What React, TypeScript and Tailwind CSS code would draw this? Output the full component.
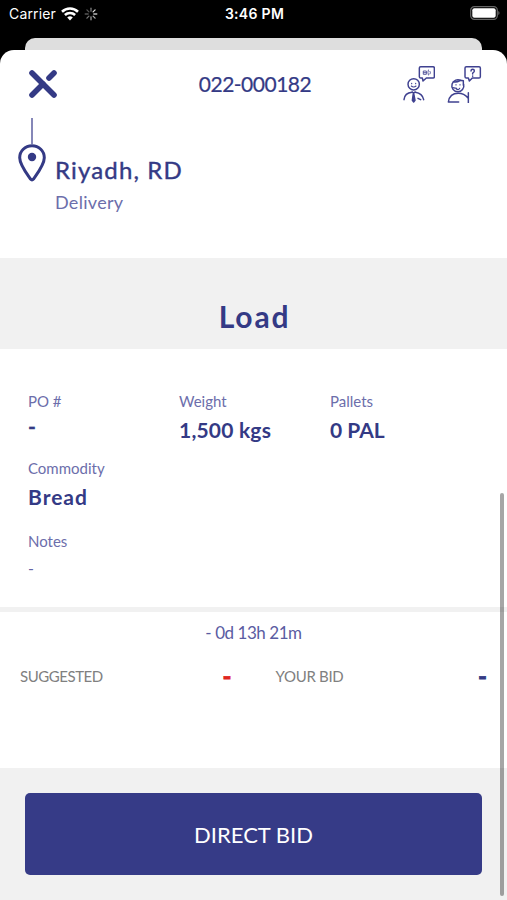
import type { ReactNode } from "react";

function WifiIcon() {
  return (
    <svg viewBox="0 0 18 14" className="h-3.5 w-[18px]" fill="none" stroke="#fff" strokeWidth="2.6">
      <path d="M1 4.7a11.6 11.6 0 0 1 16 0" />
      <path d="M3.9 8a7.4 7.4 0 0 1 10.2 0" />
      <path d="M9 13.5 6.2 10.6a4 4 0 0 1 5.6 0Z" fill="#fff" stroke="none" />
    </svg>
  );
}

function Spinner() {
  return (
    <svg viewBox="0 0 14 14" className="h-3.5 w-3.5" fill="none" strokeWidth="1.3" strokeLinecap="round">
      <path d="M7 1.2v3" stroke="#777" />
      <path d="m11.1 2.9-2 2" stroke="#ddd" />
      <path d="M12.8 7h-3" stroke="#bbb" />
      <path d="m11.1 11.1-2-2" stroke="#aaa" />
      <path d="M7 12.8v-3" stroke="#999" />
      <path d="m2.9 11.1 2-2" stroke="#777" />
      <path d="M1.2 7h3" stroke="#555" />
      <path d="m2.9 2.9 2 2" stroke="#555" />
    </svg>
  );
}

function Battery() {
  return (
    <svg viewBox="0 0 30 14" className="h-3.5 w-[30px]">
      <rect x="0.7" y="0.7" width="26.6" height="12.6" rx="3.6" fill="none" stroke="#666" strokeWidth="1.2" />
      <rect x="2.3" y="2.2" width="23.4" height="9.6" rx="2" fill="#fff" />
      <path d="M28.4 5v4c1.4-.6 1.4-3.4 0-4Z" fill="#777" />
    </svg>
  );
}

function CloseIcon() {
  return (
    <svg viewBox="0 0 30 30" className="h-[30px] w-[30px]" fill="none" stroke="#343a85" strokeWidth="5.6" strokeLinecap="round">
      <path d="m4 4 22 22" />
      <path d="M4 26 15 15" />
      <path d="m21 9 5-5" />
    </svg>
  );
}

function BrokerIcon() {
  return (
    <svg viewBox="36 28 98 116" className="h-[38.7px] w-[32.7px]" fill="none" stroke="#3f4190" strokeWidth="4.4" strokeLinecap="round" strokeLinejoin="round">
      <path d="M89 33h37q4 0 4 4v26q0 4-4 4h-20l-10 9-2-9h-5q-4 0-4-4V37q0-4 4-4Z" />
      <path d="M98 46h8v10h-8zM98 51h8M112 43q-3 7 0 15M117 47q3 4 0 8" strokeWidth="2.5" />
      <circle cx="68" cy="86" r="17" />
      <path d="M62 83v1M74 83v1M61 91q7 6 14 0" strokeWidth="3.5" />
      <path d="M39 132q2-20 24-22M73 110q21 3 25 22M81 128l8 4" />
      <path d="m64 109 4 4 4-4M67 113l-3 21 4 5 4-5-4-21Z" fill="#3f4190" />
    </svg>
  );
}

function SupportIcon() {
  return (
    <svg viewBox="172 28 104 116" className="h-[38.7px] w-[34.7px]" fill="none" stroke="#3f4190" strokeWidth="4.4" strokeLinecap="round" strokeLinejoin="round">
      <path d="M230 33h38q4 0 4 4v26q0 4-4 4h-20l-9 9-3-9h-6q-4 0-4-4V37q0-4 4-4Z" />
      <path d="M244 46q0-5 5-5t5 5q0 3-5 6v3M249 61v.5" />
      <path d="M214 75a18 18 0 1 0 8 11M190 79q16 0 22-5M207 73l14 2M221 75v14" />
      <path d="M199 87v1M211 87v1M189 96l12 2M200 100q6 4 10-2" strokeWidth="3.5" />
      <path d="M207 139h-31q4-26 30-26 17 0 29 14M236 111v30" />
    </svg>
  );
}

function PinIcon() {
  return (
    <svg viewBox="0 0 28 38" className="h-[38px] w-7" fill="none" stroke="#343a85" strokeWidth="3">
      <path d="M14 1.8C7 1.8 1.7 7 1.7 13.8c0 7 7.8 17 10.8 21.3q1.5 1.7 3 0c3-4.3 10.8-14.3 10.8-21.3C26.3 7 21 1.8 14 1.8Z" />
      <circle cx="14" cy="13" r="4.2" fill="#343a85" stroke="none" />
    </svg>
  );
}

function Field({ label, children }: { label: string; children: ReactNode }) {
  return (
    <div className="flex flex-col items-start">
      <span className="text-[15px] leading-5 text-[#6c6eab]">{label}</span>
      {children}
    </div>
  );
}

export default function App() {
  return (
    <div className="relative flex h-[900px] w-[507px] flex-col overflow-hidden bg-black font-['Lato',sans-serif] text-[#343a85]">
      <div className="flex h-[38px] items-start justify-between pt-[6px] pr-[7px] pl-[9px] font-['Inter',sans-serif] text-[14px] leading-4 text-white">
        <div className="flex flex-1 items-center gap-[5px]">
          <span className="tracking-[0.15px]">Carrier</span>
          <WifiIcon />
          <Spinner />
        </div>
        <span className="tracking-[0.3px] font-semibold">3:46 PM</span>
        <div className="flex flex-1 justify-end">
          <Battery />
        </div>
      </div>
      <div className="mx-[25px] h-3 shrink-0 rounded-t-[10px] bg-[#dedede]" />

      <div className="flex flex-1 flex-col rounded-t-[14px] bg-white">
        <header className="grid h-[68px] grid-cols-3 items-center pr-[25px] pl-7">
          <CloseIcon />
          <h1 className="text-center text-[21px] leading-7 tracking-[-0.5px] [-webkit-text-stroke:0.2px]">022-000182</h1>
          <div className="flex justify-end gap-3">
            <BrokerIcon />
            <SupportIcon />
          </div>
        </header>

        <section className="flex h-[140px] gap-[9px] pl-[18px]">
          <div className="flex w-7 flex-col items-center">
            <div className="h-[26px] w-[2px] bg-[#8587b8]" />
            <PinIcon />
          </div>
          <div className="pt-[36px]">
            <h2 className="text-[24px] leading-8 tracking-[1.15px] [-webkit-text-stroke:0.4px]">Riyadh, RD</h2>
            <p className="pt-px text-[18px] leading-[30px] tracking-[0.3px] text-[#6c6eab]">Delivery</p>
          </div>
        </section>

        <div className="flex h-[91px] items-center justify-center bg-[#f1f1f1] pt-6">
          <h2 className="pl-[2px] text-[30px] leading-9 font-bold tracking-[1.8px]">Load</h2>
        </div>

        <section className="flex h-[258px] flex-col px-7 pt-[42px]">
          <div className="grid h-[67px] grid-cols-[151px_151px_1fr]">
            <Field label="PO #">
              <b className="text-[21px] leading-[29px] [-webkit-text-stroke:0.4px]">-</b>
            </Field>
            <Field label="Weight">
              <b className="text-[21px] leading-[37px] tracking-[0.2px]">1,500 kgs</b>
            </Field>
            <Field label="Pallets">
              <b className="text-[21px] leading-[37px]">0 PAL</b>
            </Field>
          </div>
          <div className="h-[73px]">
            <Field label="Commodity">
              <b className="text-[21px] leading-[37px] tracking-[1px]">Bread</b>
            </Field>
          </div>
          <Field label="Notes">
            <span className="text-[16px] leading-[34px] text-[#6365a5]">-</span>
          </Field>
        </section>

        <div className="h-[5px] bg-[#f1f1f1]" />

        <section className="flex h-[156px] flex-col pt-[9px]">
          <p className="text-center text-[17px] leading-6 tracking-[-0.45px] text-[#5a5ca2]">- 0d 13h 21m</p>
          <div className="grid grid-cols-2 pt-[19px] pr-5 pl-5 leading-6">
            <div className="flex justify-between pr-[22px]">
              <span className="text-[15px] tracking-[-0.45px] text-[#808080]">SUGGESTED</span>
              <b className="text-[24px] text-[#e0261f] [-webkit-text-stroke:0.8px]">-</b>
            </div>
            <div className="flex justify-between pl-[22px]">
              <span className="text-[15px] tracking-[-0.3px] text-[#808080]">YOUR BID</span>
              <b className="text-[24px] [-webkit-text-stroke:0.8px]">-</b>
            </div>
          </div>
        </section>

        <footer className="flex-1 bg-[#f1f1f1] px-[25px] pt-[25px]">
          <button className="h-[82px] w-full rounded-[5px] bg-[#363b87] text-[22px] text-white">DIRECT BID</button>
        </footer>
      </div>

      {/* scroll indicator */}
      <div className="absolute top-[493px] right-[3px] h-[403px] w-1 rounded-full bg-black/35" />
    </div>
  );
}
